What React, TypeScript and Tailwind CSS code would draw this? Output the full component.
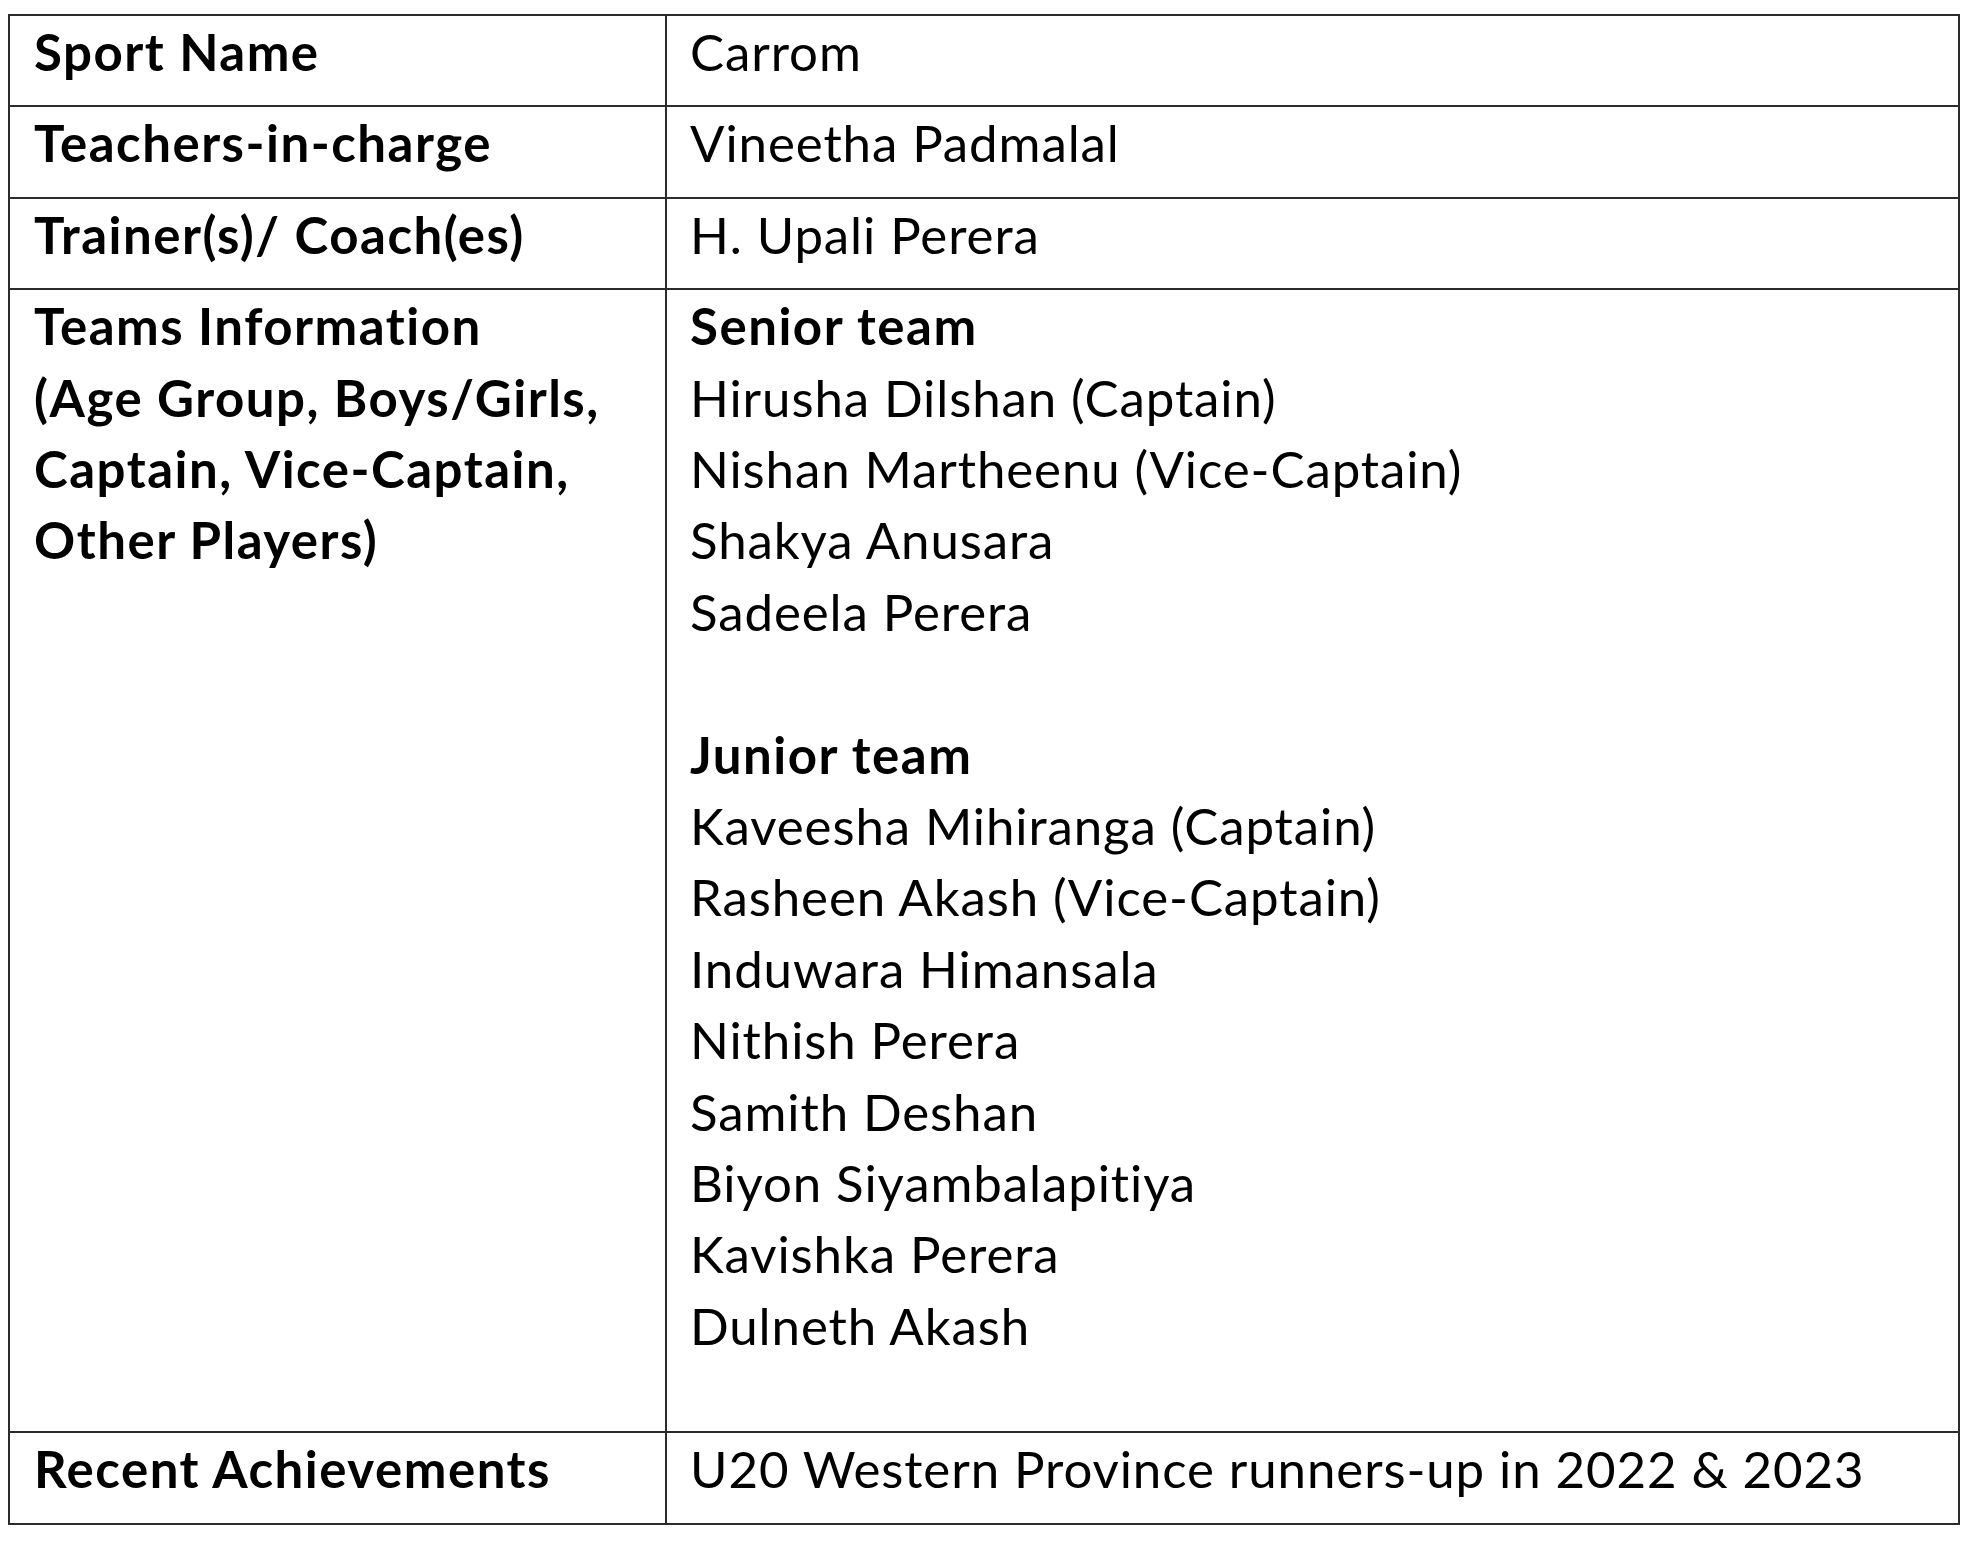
type RowProps = {
  label: React.ReactNode;
  children: React.ReactNode;
};

const cell = "border-2 border-[#2b2b2b] align-top px-6 pt-0 pb-[18px]";

function Row({ label, children }: RowProps) {
  return (
    <tr>
      <td className={`${cell} font-bold tracking-[1.5px]`}>{label}</td>
      <td className={`${cell} pl-[23px] tracking-[0.9px]`}>{children}</td>
    </tr>
  );
}

const senior = [
  "Hirusha Dilshan (Captain)",
  "Nishan Martheenu (Vice-Captain)",
  "Shakya Anusara",
  "Sadeela Perera",
];

const junior = [
  "Kaveesha Mihiranga (Captain)",
  "Rasheen Akash (Vice-Captain)",
  "Induwara Himansala",
  "Nithish Perera",
  "Samith Deshan",
  "Biyon Siyambalapitiya",
  "Kavishka Perera",
  "Dulneth Akash",
];

export default function App() {
  return (
    <div className="min-h-screen bg-white pt-[14px] pl-[8px] text-black font-[Lato,'Noto_Sans',sans-serif]">
      <table className="w-[1952px] table-fixed border-collapse text-[51px] leading-[71.4px]">
        <colgroup>
          <col className="w-[657px]" />
          <col />
        </colgroup>
        <tbody>
          <Row label="Sport Name">Carrom</Row>
          <Row label="Teachers-in-charge">Vineetha Padmalal</Row>
          <Row label="Trainer(s)/ Coach(es)">H. Upali Perera</Row>
          <Row
            label={
              <>
                <p>Teams Information</p>
                <p>(Age Group, Boys/Girls,</p>
                <p>Captain, Vice-Captain,</p>
                <p>Other Players)</p>
              </>
            }
          >
            <p className="font-bold tracking-[1.5px]">Senior team</p>
            {senior.map((name) => (
              <p key={name}>{name}</p>
            ))}
            <p className="h-[71.4px]" />
            <p className="font-bold tracking-[1.5px]">Junior team</p>
            {junior.map((name) => (
              <p key={name}>{name}</p>
            ))}
            <div className="h-[52px]" />
          </Row>
          <Row label="Recent Achievements">
            U20 Western Province runners-up in 2022 &amp; 2023
          </Row>
        </tbody>
      </table>
    </div>
  );
}
